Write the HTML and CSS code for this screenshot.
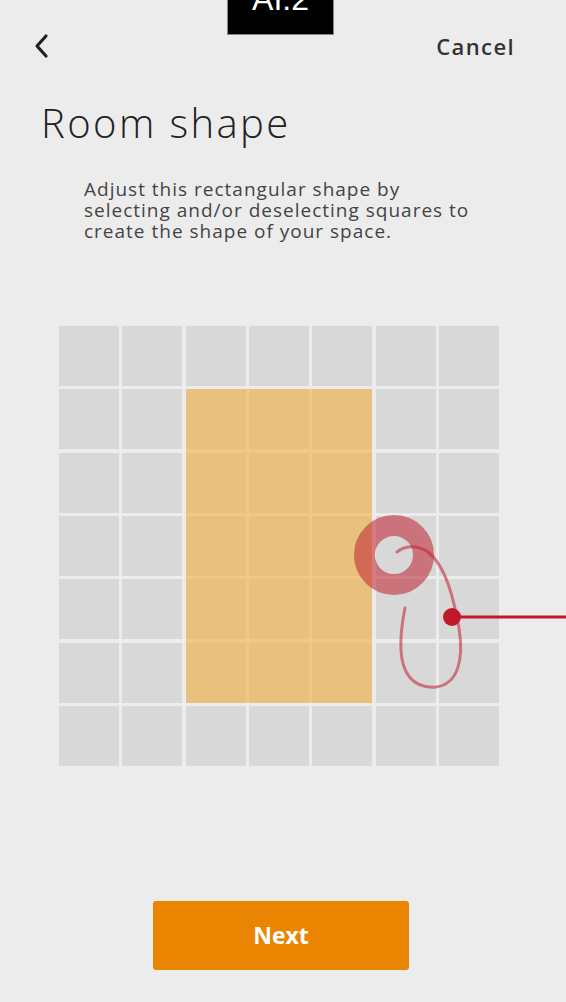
FILE: index.html
```html
<!DOCTYPE html>
<html>
<head>
<meta charset="utf-8">
<link rel="stylesheet" href="styles.css">
</head>
<body>
<div class="screen">
  <div class="tab"><span class="tab-label">AI.2</span></div>
  <header class="nav">
    <svg class="back" width="18" height="26" viewBox="0 0 18 26"><path d="M14 3 L5 13 L14 23" fill="none" stroke="#222" stroke-width="3.2" stroke-linecap="round" stroke-linejoin="round"/></svg>
    <span class="cancel">Cancel</span>
  </header>
  <h1 class="title">Room shape</h1>
  <p class="desc">Adjust this rectangular shape by<br>selecting and/or deselecting squares to<br>create the shape of your space.</p>
  <div class="grid">
    <div class="cell"></div><div class="cell"></div><div class="cell"></div><div class="cell"></div><div class="cell"></div><div class="cell"></div><div class="cell"></div>
    <div class="cell"></div><div class="cell"></div><div class="selection">
      <div class="cell on"></div><div class="cell on"></div><div class="cell on"></div>
      <div class="cell on"></div><div class="cell on"></div><div class="cell on"></div>
      <div class="cell on"></div><div class="cell on"></div><div class="cell on"></div>
      <div class="cell on"></div><div class="cell on"></div><div class="cell on"></div>
      <div class="cell on"></div><div class="cell on"></div><div class="cell on"></div>
    </div><div class="cell"></div><div class="cell"></div>
    <div class="cell"></div><div class="cell"></div><div class="cell"></div><div class="cell"></div>
    <div class="cell"></div><div class="cell"></div><div class="cell"></div><div class="cell"></div>
    <div class="cell"></div><div class="cell"></div><div class="cell"></div><div class="cell"></div>
    <div class="cell"></div><div class="cell"></div><div class="cell"></div><div class="cell"></div>
    <div class="cell"></div><div class="cell"></div><div class="cell"></div><div class="cell"></div><div class="cell"></div><div class="cell"></div><div class="cell"></div>
  </div>
  <div class="footer">
    <button class="next">Next</button>
  </div>
  <svg class="gesture" width="566" height="1002" viewBox="0 0 566 1002">
    <path d="M394 555 m-29.5 0 a29.5 29.5 0 1 0 59 0 a29.5 29.5 0 1 0 -59 0" fill="none" stroke="rgba(192,32,46,0.55)" stroke-width="21"/>
    <path d="M397 552 C404 546 416 544 428 552 C446 566 454 600 459 628 C464 660 458 684 436 687 C412 689 402 672 401 650 C400 632 403 618 405 608" fill="none" stroke="rgba(192,32,46,0.55)" stroke-width="3" stroke-linecap="round"/>
    <line x1="452" y1="617" x2="566" y2="617" stroke="#c01a2a" stroke-width="3"/>
    <circle cx="452" cy="617" r="9" fill="#c01a2a"/>
  </svg>
</div>
</body>
</html>
```

FILE: styles.css
```css
html, body {
  margin: 0;
  padding: 0;
  background: #ececec;
}
.screen {
  position: relative;
  width: 566px;
  height: 1002px;
  overflow: hidden;
  font-family: "Open Sans", "Liberation Sans", sans-serif;
}
.tab {
  position: absolute;
  left: 227px;
  top: 0;
  width: 105px;
  height: 34px;
  background: #000;
  border: 1px solid #888;
  border-top: none;
  overflow: hidden;
  text-align: center;
}
.tab-label {
  display: block;
  margin-top: -17px;
  color: #fff;
  font-family: "Liberation Sans", sans-serif;
  font-size: 32px;
  line-height: 32px;
}
.nav {
  display: flex;
  align-items: center;
  justify-content: space-between;
  height: 92px;
  padding: 0 51px 0 32px;
}
.back {
  display: block;
}
.cancel {
  font-size: 22px;
  font-weight: 600;
  color: #333;
  letter-spacing: 1.4px;
}
.title {
  margin: 6px 0 0 41px;
  font-weight: 300;
  font-size: 40px;
  line-height: 50px;
  letter-spacing: 2.4px;
  color: #222;
}
.desc {
  margin: 31px 0 0 84px;
  font-size: 19px;
  line-height: 21px;
  letter-spacing: 1px;
  color: #444;
}
.grid {
  display: grid;
  grid-template-columns: repeat(7, 1fr);
  grid-template-rows: repeat(7, 60px);
  gap: 3.33px;
  width: 440px;
  margin: 84px 0 0 59px;
}
.cell {
  background: #d8d8d8;
}
.selection {
  grid-column: 3 / 6;
  grid-row: 2 / 7;
  display: grid;
  grid-template-columns: repeat(3, 1fr);
  grid-template-rows: repeat(5, 1fr);
  gap: 3.33px;
  background: #f0c986;
}
.cell.on {
  background: #e8c17e;
}
.footer {
  display: flex;
  justify-content: center;
  margin-top: 135px;
  padding-right: 4px;
}
.next {
  width: 256px;
  height: 69px;
  border: none;
  border-radius: 3px;
  background: #e98500;
  color: #fff;
  font-family: "Open Sans", sans-serif;
  font-weight: 700;
  font-size: 23px;
}
.gesture {
  position: absolute;
  left: 0;
  top: 0;
  pointer-events: none;
}
```
